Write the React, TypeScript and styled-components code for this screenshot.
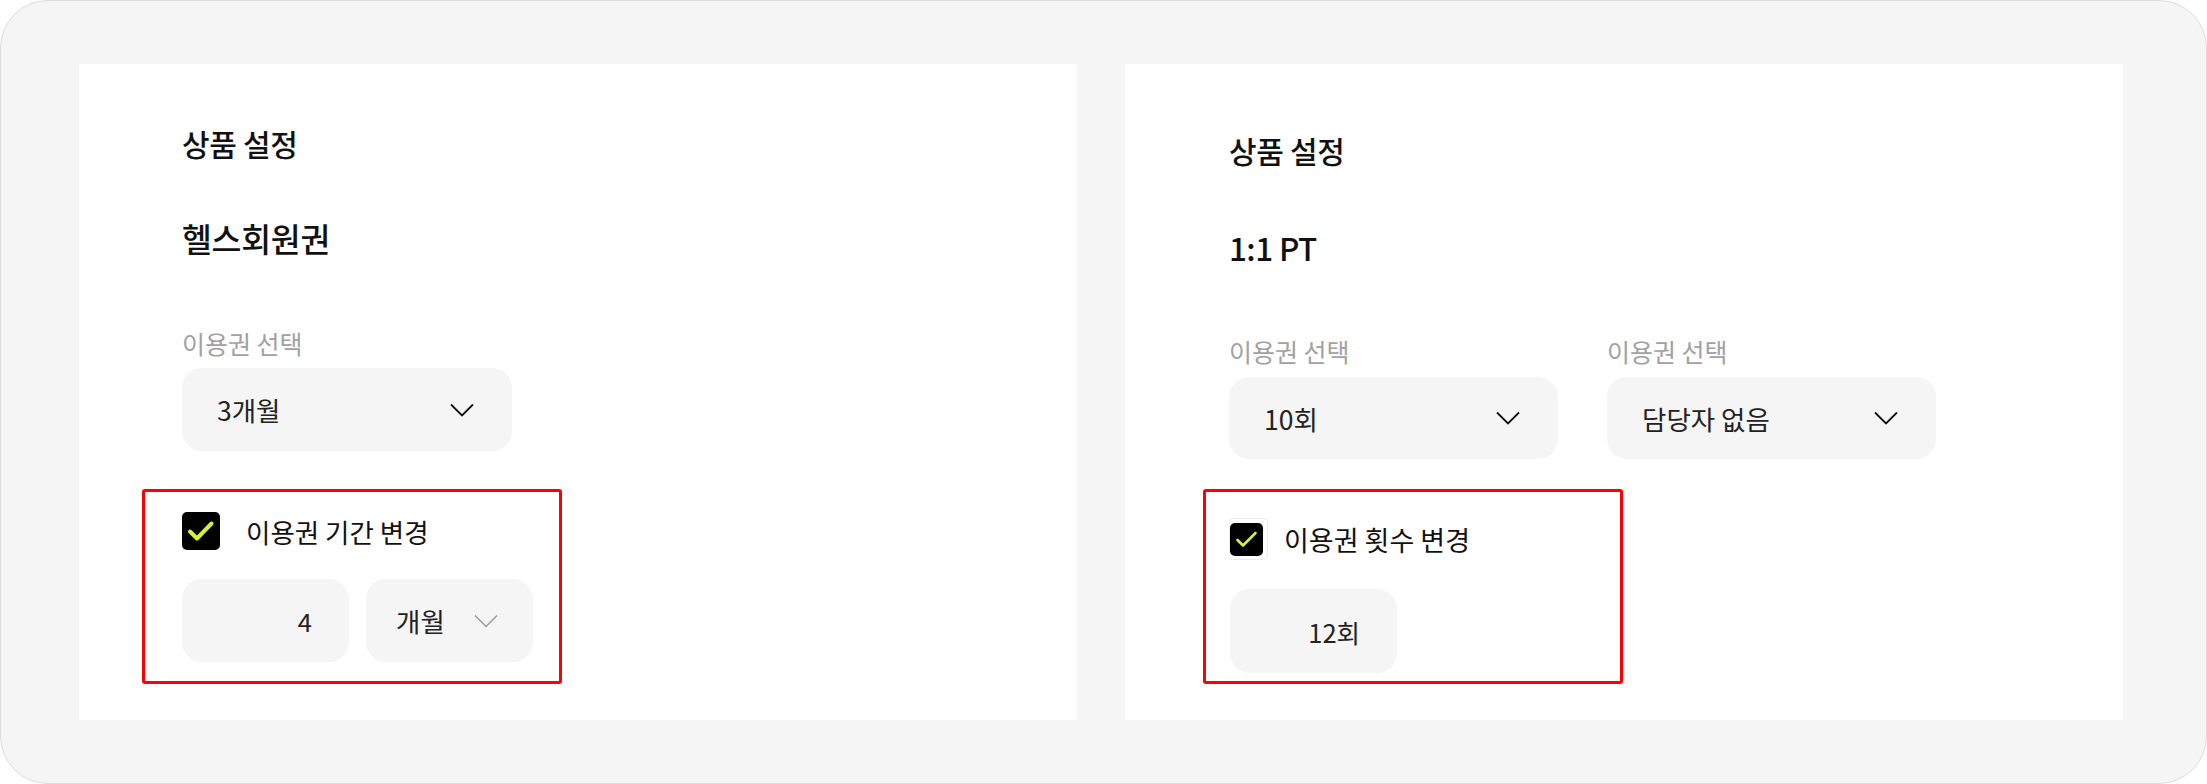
import React from "react";
import styled, { createGlobalStyle } from "styled-components";

const Global = createGlobalStyle`
  html, body { margin: 0; padding: 0; background: #ffffff; }
  body { font-family: "Noto Sans CJK KR", "Noto Sans", sans-serif; color: #111; }
  * { box-sizing: border-box; }
`;

const Frame = styled.div`
  width: 2207px;
  height: 784px;
  border: 1px solid #dcdcdc;
  border-radius: 48px;
  background: #f5f5f5;
  display: grid;
  grid-template-columns: 998px 998px;
  column-gap: 48px;
  padding: 63px 83px 63px 78px;
`;

const Panel = styled.section<{ $padTop: number; $padLeft: number }>`
  background: #ffffff;
  padding: ${(p) => p.$padTop}px 0 0 ${(p) => p.$padLeft}px;
  display: flex;
  flex-direction: column;
  align-items: flex-start;
`;

const SectionTitle = styled.h2`
  margin: 0;
  font-size: 30px;
  line-height: 40px;
  font-weight: 500;
  color: #111;
  letter-spacing: -0.3px;
`;

const ProductName = styled.h1<{ $size: number; $lh: number; $ls: number }>`
  margin: 53px 0 0;
  font-size: ${(p) => p.$size}px;
  line-height: ${(p) => p.$lh}px;
  font-weight: 500;
  color: #111;
  letter-spacing: ${(p) => p.$ls}px;
`;

const FieldRow = styled.div<{ $mt: number }>`
  margin-top: ${(p) => p.$mt}px;
  display: flex;
  gap: 49px;
`;

const Field = styled.div<{ $gap: number }>`
  display: flex;
  flex-direction: column;
  gap: ${(p) => p.$gap}px;
`;

const FieldLabel = styled.span`
  font-size: 25px;
  line-height: 30px;
  color: #a1a1a1;
`;

const SelectBox = styled.div<{ $w: number; $h: number }>`
  width: ${(p) => p.$w}px;
  height: ${(p) => p.$h}px;
  border-radius: 20px;
  background: #f5f5f5;
  display: flex;
  align-items: center;
  justify-content: space-between;
  padding: 0 38px 0 35px;
  font-size: 26.5px;
  color: #222;
`;

const Highlight = styled.div<{ $mt: number; $ml: number; $pad: string }>`
  margin-top: ${(p) => p.$mt}px;
  margin-left: ${(p) => p.$ml}px;
  width: 420px;
  height: 195px;
  border: 3px solid #ff0000;
  border-radius: 3px;
  padding: ${(p) => p.$pad};
  display: flex;
  flex-direction: column;
`;

const CheckRow = styled.label<{ $gap: number; $h: number; $fs: number }>`
  display: flex;
  align-items: center;
  gap: ${(p) => p.$gap}px;
  height: ${(p) => p.$h}px;
  font-size: ${(p) => p.$fs}px;
  color: #111;
  position: relative;
`;

const CheckBox = styled.span<{ $size: number }>`
  width: ${(p) => p.$size}px;
  height: ${(p) => p.$size}px;
  border-radius: 5px;
  background: #000;
  display: flex;
  align-items: center;
  justify-content: center;
  flex: none;
  position: relative;
  z-index: 1;
`;

const GhostBox = styled.span`
  position: absolute;
  left: -1px;
  top: -5px;
  width: 39px;
  height: 42px;
  border: 1px solid #ececec;
  border-radius: 4px;
  background: #fff;
`;

const InputRow = styled.div<{ $mt: number }>`
  margin-top: ${(p) => p.$mt}px;
  display: flex;
  gap: 17px;
`;

const ValueBox = styled.div<{ $h: number }>`
  width: 167px;
  height: ${(p) => p.$h}px;
  border-radius: 20px;
  background: #f5f5f5;
  display: flex;
  align-items: center;
  justify-content: flex-end;
  padding: 0 37px 0 0;
  font-size: 25.5px;
  color: #222;
`;

const UnitBox = styled.div`
  width: 167px;
  height: 83px;
  border-radius: 20px;
  background: #f5f5f5;
  display: flex;
  align-items: center;
  justify-content: space-between;
  padding: 0 35px 0 30px;
  font-size: 26.5px;
  color: #222;
`;

const Chevron = ({ color = "#111", w = 1.8 }: { color?: string; w?: number }) => (
  <svg width="24" height="14" viewBox="0 0 24 14" fill="none">
    <path d="M1 1.5 L12 12.5 L23 1.5" stroke={color} strokeWidth={w} strokeLinecap="butt" strokeLinejoin="miter" />
  </svg>
);

const Check = ({ size, sw, d }: { size: number; sw: number; d: string }) => (
  <svg width={size} height={size} viewBox={`0 0 ${size} ${size}`} fill="none">
    <path d={d} stroke="#d6f03a" strokeWidth={sw} strokeLinecap="round" strokeLinejoin="round" />
  </svg>
);

export default function App() {
  return (
    <>
      <Global />
      <Frame>
        <Panel $padTop={59} $padLeft={103}>
          <SectionTitle>상품 설정</SectionTitle>
          <ProductName $size={32.5} $lh={44} $ls={-0.3}>헬스회원권</ProductName>
          <FieldRow $mt={68}>
            <Field $gap={10}>
              <FieldLabel>이용권 선택</FieldLabel>
              <SelectBox $w={330} $h={83}>
                <span>3개월</span>
                <Chevron />
              </SelectBox>
            </Field>
          </FieldRow>
          <Highlight $mt={38} $ml={-40} $pad="20px 0 0 37px">
            <CheckRow $gap={26} $h={38} $fs={26.5}>
              <CheckBox $size={38}>
                <Check size={38} sw={4} d="M8 19.5 L15 26.5 L29.5 11.5" />
              </CheckBox>
              <span>이용권 기간 변경</span>
            </CheckRow>
            <InputRow $mt={29}>
              <ValueBox $h={83}>4</ValueBox>
              <UnitBox>
                <span>개월</span>
                <Chevron color="#9a9a9a" w={1.5} />
              </UnitBox>
            </InputRow>
          </Highlight>
        </Panel>

        <Panel $padTop={66} $padLeft={104}>
          <SectionTitle>상품 설정</SectionTitle>
          <ProductName $size={31.5} $lh={48} $ls={-0.6}>1:1 PT</ProductName>
          <FieldRow $mt={65}>
            <Field $gap={11}>
              <FieldLabel>이용권 선택</FieldLabel>
              <SelectBox $w={329} $h={82}>
                <span>10회</span>
                <Chevron />
              </SelectBox>
            </Field>
            <Field $gap={11}>
              <FieldLabel>이용권 선택</FieldLabel>
              <SelectBox $w={329} $h={82}>
                <span>담당자 없음</span>
                <Chevron />
              </SelectBox>
            </Field>
          </FieldRow>
          <Highlight $mt={30} $ml={-26} $pad="31px 0 0 24px">
            <CheckRow $gap={21} $h={33} $fs={27}>
              <GhostBox />
              <CheckBox $size={33}>
                <Check size={33} sw={2.6} d="M7.5 17 L13 22.5 L25.5 10" />
              </CheckBox>
              <span>이용권 횟수 변경</span>
            </CheckRow>
            <InputRow $mt={33}>
              <ValueBox $h={84}>12회</ValueBox>
            </InputRow>
          </Highlight>
        </Panel>
      </Frame>
    </>
  );
}
